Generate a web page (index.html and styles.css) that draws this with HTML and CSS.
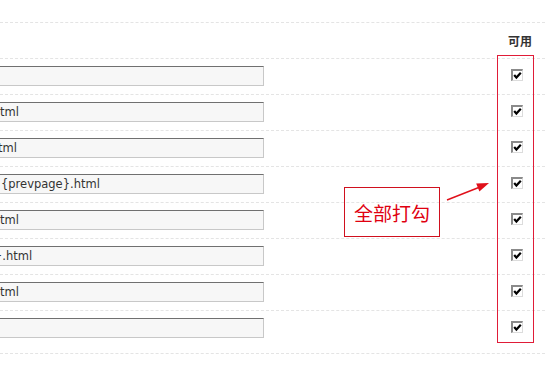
FILE: index.html
```html
<!DOCTYPE html>
<html lang="zh">
<head>
<meta charset="utf-8">
<link rel="stylesheet" href="styles.css">
</head>
<body>
<div class="page">
  <div class="table">
    <div class="row row-top"></div>
    <div class="row row-head"><div class="col-on head">可用</div></div>
    <div class="row"><div class="field"></div><div class="col-on"><span class="cb"><svg viewBox="0 0 9 9" width="9" height="9"><path d="M1.2 4 L3.4 6.6 L7.8 1.8" fill="none" stroke="#000" stroke-width="2.2"/></svg></span></div></div>
    <div class="row"><div class="field"><span class="cut-a">tml</span></div><div class="col-on"><span class="cb"><svg viewBox="0 0 9 9" width="9" height="9"><path d="M1.2 4 L3.4 6.6 L7.8 1.8" fill="none" stroke="#000" stroke-width="2.2"/></svg></span></div></div>
    <div class="row"><div class="field"><span class="cut-b">tml</span></div><div class="col-on"><span class="cb"><svg viewBox="0 0 9 9" width="9" height="9"><path d="M1.2 4 L3.4 6.6 L7.8 1.8" fill="none" stroke="#000" stroke-width="2.2"/></svg></span></div></div>
    <div class="row"><div class="field"><span>{prevpage}.html</span></div><div class="col-on"><span class="cb"><svg viewBox="0 0 9 9" width="9" height="9"><path d="M1.2 4 L3.4 6.6 L7.8 1.8" fill="none" stroke="#000" stroke-width="2.2"/></svg></span></div></div>
    <div class="row"><div class="field"><span class="cut-a">tml</span></div><div class="col-on"><span class="cb"><svg viewBox="0 0 9 9" width="9" height="9"><path d="M1.2 4 L3.4 6.6 L7.8 1.8" fill="none" stroke="#000" stroke-width="2.2"/></svg></span></div></div>
    <div class="row"><div class="field"><span class="cut-c">}.html</span></div><div class="col-on"><span class="cb"><svg viewBox="0 0 9 9" width="9" height="9"><path d="M1.2 4 L3.4 6.6 L7.8 1.8" fill="none" stroke="#000" stroke-width="2.2"/></svg></span></div></div>
    <div class="row"><div class="field"><span class="cut-a">tml</span></div><div class="col-on"><span class="cb"><svg viewBox="0 0 9 9" width="9" height="9"><path d="M1.2 4 L3.4 6.6 L7.8 1.8" fill="none" stroke="#000" stroke-width="2.2"/></svg></span></div></div>
    <div class="row row-last"><div class="field"></div><div class="col-on"><span class="cb"><svg viewBox="0 0 9 9" width="9" height="9"><path d="M1.2 4 L3.4 6.6 L7.8 1.8" fill="none" stroke="#000" stroke-width="2.2"/></svg></span></div></div>
  </div>

  <div class="mark-frame"></div>
  <div class="note">全部打勾</div>
  <svg class="arrow" viewBox="0 0 60 35" width="60" height="35">
    <line x1="7" y1="25" x2="40" y2="12" stroke="#e0101a" stroke-width="1.4"/>
    <polygon points="49,8 39.4,16.4 36.2,8.6" fill="#e0101a"/>
  </svg>
</div>
</body>
</html>
```

FILE: styles.css
```css
html, body {
  margin: 0;
  padding: 0;
  background: #fff;
}

.page {
  position: relative;
  width: 545px;
  height: 372px;
  overflow: hidden;
  font-family: "DejaVu Sans", Verdana, sans-serif;
  font-size: 11.5px;
  color: #333;
}

.table {
  display: flex;
  flex-direction: column;
}

.row {
  display: flex;
  align-items: flex-start;
  height: 35px;
  border-bottom: 1px dashed #e4e4e4;
  box-sizing: content-box;
}

.row-top {
  height: 22px;
}

.row-head {
  align-items: center;
}

.row-last {
  height: 42px;
}

.field {
  box-sizing: border-box;
  margin-top: 7px;
  margin-left: -1px;
  width: 265px;
  height: 20px;
  padding-left: 1px;
  background: #f7f7f7;
  border: 1px solid #c8c8c8;
  border-top-color: #707070;
  border-left-color: #707070;
  line-height: 18px;
  white-space: nowrap;
  overflow: hidden;
}

.field span {
  display: inline-block;
}

.cut-a { margin-left: -1px; }
.cut-b { margin-left: -3px; }
.cut-c { margin-left: -6px; }

.col-on {
  margin-left: auto;
  margin-right: 5px;
  width: 46px;
  display: flex;
  justify-content: center;
}

.row .col-on .cb {
  margin-top: 10px;
}

.head {
  font-family: "Noto Sans CJK SC", sans-serif;
  font-weight: bold;
  font-size: 12px;
  color: #333;
  padding-left: 6px;
  box-sizing: border-box;
}

.cb {
  box-sizing: border-box;
  width: 12px;
  height: 12px;
  background: #fff;
  border: 1px solid #dcdcdc;
  border-top: 2px solid #8a8a8a;
  border-left: 2px solid #8a8a8a;
  display: flex;
  align-items: center;
  justify-content: center;
}

.cb svg {
  display: block;
}

.mark-frame {
  position: absolute;
  left: 497px;
  top: 55px;
  width: 37px;
  height: 288px;
  box-sizing: border-box;
  border: 1px solid #e01c38;
}

.note {
  position: absolute;
  left: 344px;
  top: 187px;
  width: 96px;
  height: 50px;
  box-sizing: border-box;
  border: 1px solid #d0101e;
  color: #e00010;
  font-family: "Noto Sans CJK SC", sans-serif;
  font-size: 19px;
  display: flex;
  align-items: center;
  justify-content: center;
}

.arrow {
  position: absolute;
  left: 440px;
  top: 175px;
}
```
